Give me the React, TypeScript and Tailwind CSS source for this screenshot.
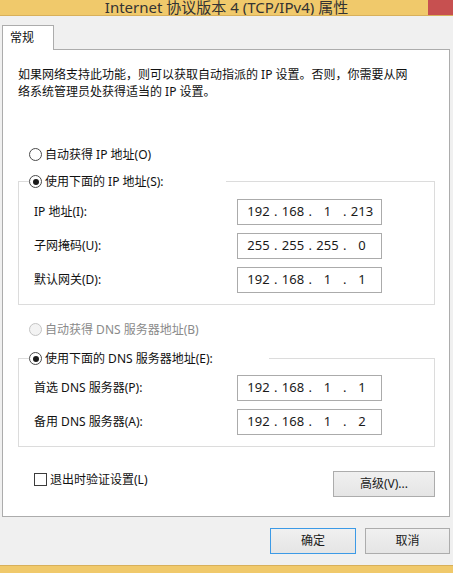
import { Fragment } from 'react';

const uiFont = { fontFamily: '"Noto Sans", "Noto Sans CJK SC", sans-serif' };

function Radio({ checked, disabled }: { checked?: boolean; disabled?: boolean }) {
  return (
    <span
      className={`w-[13px] h-[13px] shrink-0 rounded-full border flex items-center justify-center ${
        disabled ? 'border-[#c4c4c4] bg-[#f3f3f3]' : 'border-[#4a4a4a] bg-white'
      }`}
    >
      {checked && <span className="w-[6px] h-[6px] rounded-full bg-[#1a1a1a]" />}
    </span>
  );
}

function IpBox({ parts }: { parts: string[] }) {
  return (
    <div className="w-[145px] h-[26px] border border-[#ababab] bg-white flex items-center pl-[7px] text-[13px] text-[#1a1a1a]">
      {parts.map((p, i) => (
        <Fragment key={i}>
          <span className="w-[27px] text-center">{p}</span>
          {i < 3 && <span className="w-[7.5px] text-center">.</span>}
        </Fragment>
      ))}
    </div>
  );
}

function FieldRow({ label, parts }: { label: string; parts: string[] }) {
  return (
    <div className="flex items-center h-[26px] pl-[15px]">
      <span className="w-[203px]">{label}</span>
      <IpBox parts={parts} />
    </div>
  );
}

function WinButton({ children, focused, className }: { children: React.ReactNode; focused?: boolean; className: string }) {
  return (
    <button
      className={`h-[26px] border bg-gradient-to-b from-[#f0f0f0] to-[#e5e5e5] text-[12px] text-[#1a1a1a] ${
        focused ? 'border-[#3c9ae6]' : 'border-[#acacac]'
      } ${className}`}
    >
      {children}
    </button>
  );
}

export default function App() {
  return (
    <div className="w-[453px] h-[573px] bg-[#f0f0f0] flex flex-col overflow-hidden text-[12px] text-[#111]" style={uiFont}>
      {/* 标题栏 */}
      <div className="h-[16px] shrink-0 bg-[#f0c96b] border-b border-[#d8b05a] flex overflow-hidden">
        <div className="w-[25px]" />
        <div className="flex-1 text-center text-[15px] leading-[20px] -mt-[3px] text-[#333]">
          Internet 协议版本 4 (TCP/IPv4) 属性
        </div>
        <div className="w-[25px] h-[15px] bg-[#c75050]" />
      </div>

      {/* 选项卡 */}
      <div className="mt-[9px] ml-[2px] flex">
        <div className="relative z-10 -mb-px w-[52px] h-[25px] border border-b-0 border-[#acacac] bg-white pl-[7px] leading-[24px]">
          常规
        </div>
      </div>

      <div className="ml-[2px] w-[448px] h-[468px] shrink-0 border border-[#acacac] bg-white flex flex-col">
        <p className="mt-[16px] ml-[15px] leading-[17px]">
          如果网络支持此功能，则可以获取自动指派的 IP 设置。否则，你需要从网
          <br />
          络系统管理员处获得适当的 IP 设置。
        </p>

        <div className="mt-[46px] ml-[26px] h-[17px] flex items-center gap-[3px]">
          <Radio />
          <span>自动获得 IP 地址(O)</span>
        </div>

        <fieldset className="mt-[10px] ml-[15px] w-[417px] border border-[#dcdcdc] pb-[11px]">
          <legend className="ml-[10px] pr-[62px]">
            <span className="h-[17px] flex items-center gap-[3px]">
              <Radio checked />
              <span>使用下面的 IP 地址(S):</span>
            </span>
          </legend>
          <div className="mt-[9px] flex flex-col gap-[8px]">
            <FieldRow label="IP 地址(I):" parts={['192', '168', '1', '213']} />
            <FieldRow label="子网掩码(U):" parts={['255', '255', '255', '0']} />
            <FieldRow label="默认网关(D):" parts={['192', '168', '1', '1']} />
          </div>
        </fieldset>

        <div className="mt-[16px] ml-[26px] h-[17px] flex items-center gap-[3px] text-[#8a8a8a]">
          <Radio disabled />
          <span>自动获得 DNS 服务器地址(B)</span>
        </div>

        <fieldset className="mt-[12px] ml-[15px] w-[417px] border border-[#dcdcdc] pb-[11px]">
          <legend className="ml-[10px] pr-[56px]">
            <span className="h-[17px] flex items-center gap-[3px]">
              <Radio checked />
              <span>使用下面的 DNS 服务器地址(E):</span>
            </span>
          </legend>
          <div className="mt-[8px] flex flex-col gap-[8px]">
            <FieldRow label="首选 DNS 服务器(P):" parts={['192', '168', '1', '1']} />
            <FieldRow label="备用 DNS 服务器(A):" parts={['192', '168', '1', '2']} />
          </div>
        </fieldset>

        <div className="mt-[24px] flex items-start">
          <label className="ml-[31px] h-[17px] flex items-center gap-[3px]">
            <span className="w-[13px] h-[13px] border border-[#3c3c3c] bg-white" />
            <span>退出时验证设置(L)</span>
          </label>
          <WinButton className="ml-auto mr-[14px] w-[102px]">高级(V)...</WinButton>
        </div>
      </div>

      <div className="mt-[11px] flex justify-end gap-[9px] pr-[3px]">
        <WinButton focused className="w-[86px]">确定</WinButton>
        <WinButton className="w-[85px]">取消</WinButton>
      </div>

      <div className="flex-1" />
      <div className="h-[8px] shrink-0 bg-[#f0c96b] border-t border-[#d8b05a]" />
    </div>
  );
}
